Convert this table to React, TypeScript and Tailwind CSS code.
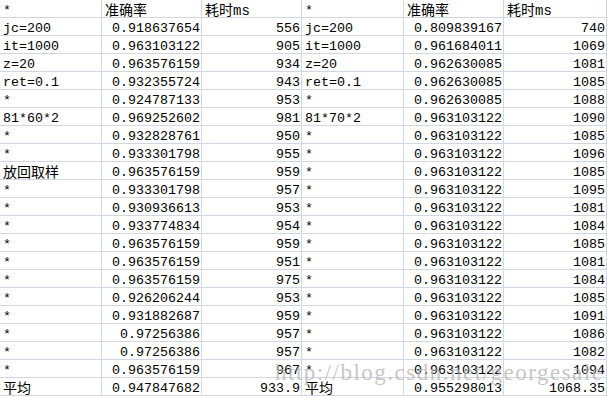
const left = [
  ["*", "准确率", "耗时ms"],
  ["jc=200", "0.918637654", "556"],
  ["it=1000", "0.963103122", "905"],
  ["z=20", "0.963576159", "934"],
  ["ret=0.1", "0.932355724", "943"],
  ["*", "0.924787133", "953"],
  ["81*60*2", "0.969252602", "981"],
  ["*", "0.932828761", "950"],
  ["*", "0.933301798", "955"],
  ["放回取样", "0.963576159", "959"],
  ["*", "0.933301798", "957"],
  ["*", "0.930936613", "953"],
  ["*", "0.933774834", "954"],
  ["*", "0.963576159", "959"],
  ["*", "0.963576159", "951"],
  ["*", "0.963576159", "975"],
  ["*", "0.926206244", "953"],
  ["*", "0.931882687", "959"],
  ["*", "0.97256386", "957"],
  ["*", "0.97256386", "957"],
  ["*", "0.963576159", "967"],
  ["平均", "0.947847682", "933.9"],
];

const right = [
  ["*", "准确率", "耗时ms"],
  ["jc=200", "0.809839167", "740"],
  ["it=1000", "0.961684011", "1069"],
  ["z=20", "0.962630085", "1081"],
  ["ret=0.1", "0.962630085", "1085"],
  ["*", "0.962630085", "1088"],
  ["81*70*2", "0.963103122", "1090"],
  ["*", "0.963103122", "1085"],
  ["*", "0.963103122", "1096"],
  ["*", "0.963103122", "1085"],
  ["*", "0.963103122", "1095"],
  ["*", "0.963103122", "1081"],
  ["*", "0.963103122", "1084"],
  ["*", "0.963103122", "1085"],
  ["*", "0.963103122", "1081"],
  ["*", "0.963103122", "1084"],
  ["*", "0.963103122", "1085"],
  ["*", "0.963103122", "1091"],
  ["*", "0.963103122", "1086"],
  ["*", "0.963103122", "1082"],
  ["*", "0.963103122", "1094"],
  ["平均", "0.955298013", "1068.35"],
];

const cell = "h-[18px] border-b border-r border-[#d0d7e5] pt-[5px] leading-[12px] whitespace-nowrap overflow-hidden";

function Cell({ text, num, header }: { text: string; num: boolean; header: boolean }) {
  const isCjk = /[\u4e00-\u9fff]/.test(text);
  return (
    <div className={`${cell} ${num && !header ? "text-right pr-[1px]" : "pl-[3px]"}`}>
      <span className={isCjk ? "text-[14px]" : ""}>{text}</span>
    </div>
  );
}

export default function App() {
  const rows = left.map((r, i) => [...r, ...right[i]]);
  return (
    <div
      className="relative w-[607px] h-[397px] overflow-hidden bg-white text-black text-[13.33px]"
      style={{ fontFamily: '"Liberation Mono", "Noto Sans CJK SC", monospace' }}
    >
      <div className="grid grid-cols-[102px_100px_100px_102px_100px_103px] w-[607px]">
        {rows.map((r, i) =>
          r.map((t, j) => (
            <Cell key={`${i}-${j}`} text={t} num={j % 3 !== 0} header={i === 0} />
          ))
        )}
      </div>
      <div
        className="absolute left-[275px] top-[360px] text-[23px] leading-[26px] tracking-[1.5px] text-[#b4b4b4]/75 whitespace-nowrap pointer-events-none"
        style={{ fontFamily: '"Liberation Serif", serif' }}
      >
        http://blog.csdn.net/georgesale
      </div>
    </div>
  );
}
